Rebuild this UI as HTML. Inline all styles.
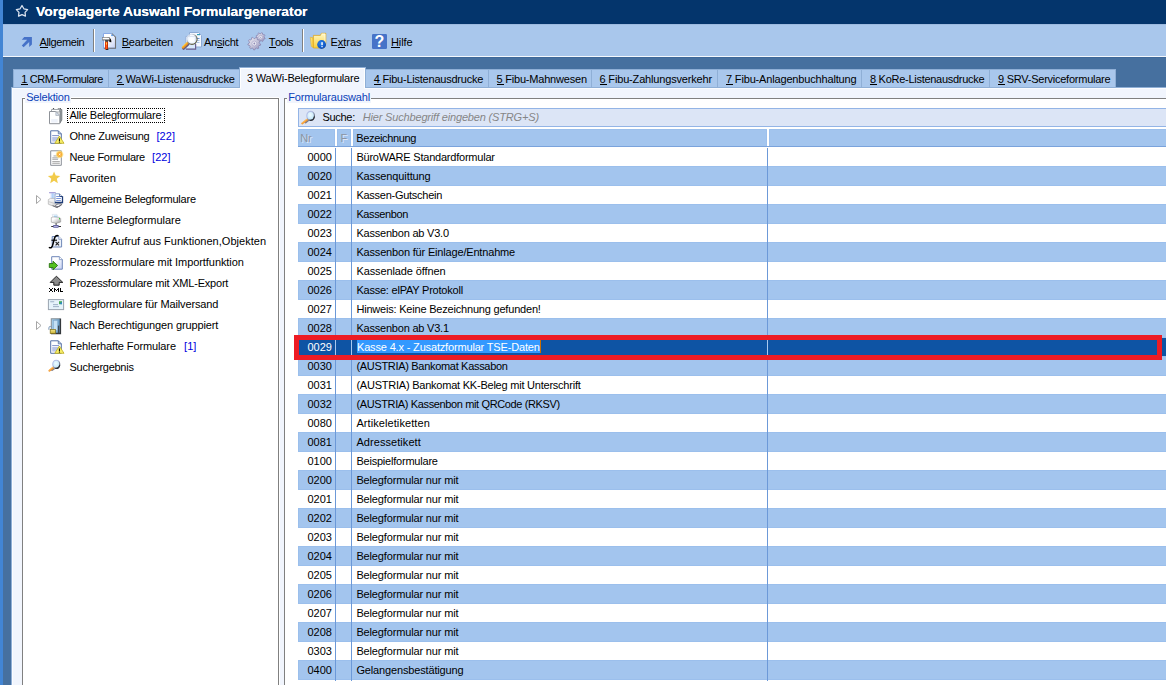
<!DOCTYPE html><html><head><meta charset="utf-8"><title>Vorgelagerte Auswahl Formulargenerator</title><style>
html,body{margin:0;padding:0}body{width:1166px;height:685px;overflow:hidden;position:relative;background:#46709F;font-family:"Liberation Sans", sans-serif;font-size:11px}
div,span,svg{position:absolute;box-sizing:border-box}
.t{white-space:pre;line-height:14px;height:14px;font-size:11px}
.t u{position:static;text-decoration:none;border-bottom:1px solid currentColor;display:inline-block;line-height:10px;height:10px;padding-right:1.3px;margin-right:-1.3px}
.title{transform-origin:0 0;text-shadow:0 0 .6px #fff}
.hdr{text-shadow:1px 1px 0 rgba(255,255,255,.6)}
</style></head><body>
<div style="left:0;top:0;width:3px;height:685px;background:#4285D4"></div>
<div style="left:3px;top:0;width:1163px;height:24px;background:#04356C"></div>
<div style="left:3px;top:24px;width:1163px;height:32px;background:#A9C7EC"></div>
<div style="left:3px;top:56px;width:1163px;height:1px;background:#F4F8FD"></div>
<div style="left:93px;top:29px;width:1px;height:23px;background:#808080"></div><div style="left:94px;top:29px;width:1px;height:23px;background:#fff"></div>
<div style="left:302px;top:29px;width:1px;height:23px;background:#808080"></div><div style="left:303px;top:29px;width:1px;height:23px;background:#fff"></div>
<div style="left:3px;top:24px;width:1163px;height:1px;background:#9DBADF"></div>
<div style="left:3px;top:57px;width:1163px;height:1px;background:#3E6899"></div>
<div style="left:13px;top:69px;width:1103px;height:18px;background:#A9C7EC;border-top:1px solid #8FAFD6;border-left:1px solid #8FAFD6"></div>
<div style="left:108px;top:69px;width:1px;height:18px;background:#8FAFD6"></div>
<div style="left:488px;top:69px;width:1px;height:18px;background:#8FAFD6"></div>
<div style="left:591px;top:69px;width:1px;height:18px;background:#8FAFD6"></div>
<div style="left:717px;top:69px;width:1px;height:18px;background:#8FAFD6"></div>
<div style="left:861px;top:69px;width:1px;height:18px;background:#8FAFD6"></div>
<div style="left:989px;top:69px;width:1px;height:18px;background:#8FAFD6"></div>
<div style="left:1115px;top:69px;width:1px;height:18px;background:#8FAFD6"></div>
<div style="left:11px;top:87px;width:1160px;height:600px;background:#FBFCFF;border-top:1px solid #8FAFD6;border-left:1px solid #8FAFD6"></div>
<div style="left:13px;top:89px;width:1160px;height:600px;background:#F1F5FD"></div>
<div style="left:239px;top:67px;width:127px;height:21px;background:#fff;border:1px solid #8FAFD6;border-bottom:none"></div>
<div style="left:241px;top:69px;width:123px;height:21px;background:#F1F5FD"></div>
<div style="left:22px;top:98px;width:257px;height:600px;background:#fff;border:1px solid #808080;box-shadow:1px 0 0 #fff,0 -1px 0 #fff"></div>
<div style="left:284px;top:98px;width:900px;height:600px;background:#fff;border:1px solid #808080;box-shadow:-1px 0 0 #fff inset"></div>
<div style="left:25px;top:92px;width:46px;height:11px;background:#F1F5FD"></div>
<div style="left:287px;top:92px;width:84px;height:11px;background:#F1F5FD"></div>
<div style="left:67px;top:108px;width:98px;height:15px;border:1px dotted #000"></div>
<div style="left:298px;top:108px;width:900px;height:19px;background:#DCE5F6;border:1px solid #93B4E6"></div>
<div style="left:298px;top:129px;width:37px;height:17px;background:#A3C5EE;border:1px solid #9BBFEC;border-bottom:none"></div>
<div style="left:337px;top:129px;width:14px;height:17px;background:#A3C5EE;border:1px solid #9BBFEC;border-bottom:none"></div>
<div style="left:353px;top:129px;width:414px;height:17px;background:#A3C5EE;border:1px solid #9BBFEC;border-bottom:none"></div>
<div style="left:769px;top:129px;width:431px;height:17px;background:#A3C5EE;border:1px solid #9BBFEC;border-bottom:none"></div>
<div style="left:298px;top:146px;width:900px;height:1px;background:#7AA3DC"></div>
<div style="left:298px;top:166px;width:900px;height:20px;background:#A3C5EE;border:1px solid #9BBFEC"></div>
<div style="left:298px;top:204px;width:900px;height:20px;background:#A3C5EE;border:1px solid #9BBFEC"></div>
<div style="left:298px;top:242px;width:900px;height:20px;background:#A3C5EE;border:1px solid #9BBFEC"></div>
<div style="left:298px;top:280px;width:900px;height:20px;background:#A3C5EE;border:1px solid #9BBFEC"></div>
<div style="left:298px;top:318px;width:900px;height:20px;background:#A3C5EE;border:1px solid #9BBFEC"></div>
<div style="left:298px;top:338px;width:900px;height:18px;background:#0E54A4"></div>
<div style="left:357px;top:339px;width:183px;height:14px;background:#3399FF"></div>
<div style="left:540px;top:339px;width:1px;height:14px;background:#CC6E00"></div>
<div style="left:298px;top:356px;width:900px;height:20px;background:#A3C5EE;border:1px solid #9BBFEC"></div>
<div style="left:298px;top:394px;width:900px;height:20px;background:#A3C5EE;border:1px solid #9BBFEC"></div>
<div style="left:298px;top:432px;width:900px;height:20px;background:#A3C5EE;border:1px solid #9BBFEC"></div>
<div style="left:298px;top:470px;width:900px;height:20px;background:#A3C5EE;border:1px solid #9BBFEC"></div>
<div style="left:298px;top:508px;width:900px;height:20px;background:#A3C5EE;border:1px solid #9BBFEC"></div>
<div style="left:298px;top:546px;width:900px;height:20px;background:#A3C5EE;border:1px solid #9BBFEC"></div>
<div style="left:298px;top:584px;width:900px;height:20px;background:#A3C5EE;border:1px solid #9BBFEC"></div>
<div style="left:298px;top:622px;width:900px;height:20px;background:#A3C5EE;border:1px solid #9BBFEC"></div>
<div style="left:298px;top:660px;width:900px;height:20px;background:#A3C5EE;border:1px solid #9BBFEC"></div>
<div style="left:335px;top:148px;width:1px;height:533px;background:#6C99D8"></div>
<div style="left:335px;top:338px;width:1px;height:18px;background:#A9C8EE"></div>
<div style="left:351px;top:148px;width:1px;height:533px;background:#6C99D8"></div>
<div style="left:351px;top:338px;width:1px;height:18px;background:#A9C8EE"></div>
<div style="left:767px;top:148px;width:1px;height:533px;background:#6C99D8"></div>
<div style="left:767px;top:338px;width:1px;height:18px;background:#A9C8EE"></div>
<div style="left:294px;top:335px;width:868px;height:25px;border:5px solid #ED1C24"></div>
<svg width="1166" height="685" viewBox="0 0 1166 685" style="left:0;top:0"><defs><linearGradient id="gDoc" x1="0" y1="0" x2="1" y2="1"><stop offset="0.35" stop-color="#fff"/><stop offset="1" stop-color="#C4D0F4"/></linearGradient><linearGradient id="gHam" x1="0" y1="0" x2="0" y2="1"><stop offset="0" stop-color="#C8C8C8"/><stop offset="0.35" stop-color="#FFFFFF"/><stop offset="0.6" stop-color="#F0F0F0"/><stop offset="1" stop-color="#5A5A5A"/></linearGradient><linearGradient id="gHandle" x1="0" y1="0" x2="1" y2="0"><stop offset="0" stop-color="#D42A08"/><stop offset="0.5" stop-color="#FF5A18"/><stop offset="1" stop-color="#A81C04"/></linearGradient><linearGradient id="gFold" x1="0" y1="0" x2="0" y2="1"><stop offset="0" stop-color="#FFF9C8"/><stop offset="1" stop-color="#F7CF3C"/></linearGradient><linearGradient id="gFold2" x1="0" y1="0" x2="1" y2="0"><stop offset="0" stop-color="#FFF2A0"/><stop offset="1" stop-color="#F2C024"/></linearGradient><radialGradient id="gInfo" cx="0.4" cy="0.35" r="0.7"><stop offset="0" stop-color="#2C86F0"/><stop offset="1" stop-color="#0648B8"/></radialGradient><radialGradient id="gLens" cx="0.45" cy="0.4" r="0.6"><stop offset="0" stop-color="#F0FBFF"/><stop offset="1" stop-color="#BCE4FA"/></radialGradient><linearGradient id="gRim" x1="0" y1="0" x2="1" y2="1"><stop offset="0.35" stop-color="#B4BEE6"/><stop offset="0.8" stop-color="#5A6070"/></linearGradient><linearGradient id="gGear" x1="0" y1="0" x2="1" y2="1"><stop offset="0" stop-color="#ECECF4"/><stop offset="0.55" stop-color="#C4C2D8"/><stop offset="1" stop-color="#9490BA"/></linearGradient><linearGradient id="gRimA" x1="0" y1="0" x2="1" y2="1"><stop offset="0.25" stop-color="#D4DCEA"/><stop offset="0.7" stop-color="#5E5C44"/></linearGradient><linearGradient id="gPap" x1="0" y1="0" x2="1" y2="0"><stop offset="0" stop-color="#F6F4FF"/><stop offset="0.6" stop-color="#A8CCF8"/><stop offset="1" stop-color="#D8E8FC"/></linearGradient><linearGradient id="gPrn2" x1="0" y1="0" x2="0.6" y2="1"><stop offset="0" stop-color="#FAFAFA"/><stop offset="0.6" stop-color="#E6E6E6"/><stop offset="1" stop-color="#A8A8A8"/></linearGradient><linearGradient id="gPrn3" x1="0" y1="0" x2="1" y2="1"><stop offset="0.3" stop-color="#FDFDFD"/><stop offset="0.6" stop-color="#D8D8D8"/><stop offset="1" stop-color="#8E8E8E"/></linearGradient><linearGradient id="gLock" x1="0" y1="0" x2="0" y2="1"><stop offset="0" stop-color="#F4E88C"/><stop offset="1" stop-color="#C8B030"/></linearGradient><linearGradient id="gDoor" x1="0" y1="0" x2="1" y2="0"><stop offset="0" stop-color="#A8D0EC"/><stop offset="1" stop-color="#5E94C0"/></linearGradient><linearGradient id="gPrn" x1="0" y1="0" x2="0" y2="1"><stop offset="0" stop-color="#F2F2F2"/><stop offset="1" stop-color="#9A9A9A"/></linearGradient><radialGradient id="gNew" cx="0.5" cy="0.5" r="0.5"><stop offset="0" stop-color="#FFEFC8"/><stop offset="0.3" stop-color="#F9A21E"/><stop offset="0.55" stop-color="#FBB840" stop-opacity="0.95"/><stop offset="0.8" stop-color="#FFE070" stop-opacity="0.55"/><stop offset="1" stop-color="#FFF0A0" stop-opacity="0"/></radialGradient></defs><polygon points="22.00,5.50 23.88,8.81 27.61,9.58 25.04,12.39 25.47,16.17 22.00,14.60 18.53,16.17 18.96,12.39 16.39,9.58 20.12,8.81" fill="none" stroke="#DCE4F0" stroke-width="1.25" stroke-linejoin="round"/>
<polygon points="24.2,37.1 31.9,37.1 31.9,44.6 29.2,47 29.2,42 23.6,47.2 21.8,45.5 27.2,39.8 21.8,39.8" fill="#4672C8"/>
<path d="M103.5 33.5 H111.5 L115.5 37.5 V48.2 H103.5 Z" fill="url(#gDoc)" stroke="#86A8E6" stroke-width="1"/>
<path d="M111.8 33.6 L115.5 37.3 V48.2 H103.8" fill="none" stroke="#707070" stroke-width="1.1"/>
<path d="M111.4 33.8 L115.2 37.6 H111.4 Z" fill="#E8F0FF"/><path d="M111.4 34 L113.4 36 H111.4 Z" fill="#3C8CE8"/>
<path d="M107.5 37.5 Q111.5 37.3 111.4 42.3 L109.5 41.9 Q109.7 40.1 107.5 40.1 Z" fill="#0a0a0a"/>
<rect x="102.3" y="37.5" width="7.2" height="2.6" fill="url(#gHam)" stroke="#7C7C7C" stroke-width="0.6"/>
<path d="M105 40.1 H108.6 L108 42 H105.2 Z" fill="#4a4a4a"/>
<rect x="105" y="41.8" width="3" height="7.9" fill="url(#gHandle)"/><rect x="106" y="42.6" width="1" height="2" fill="#FFD24A"/>
<rect x="106" y="49" width="2.4" height="0.9" fill="#222"/>
<path d="M189.5 32.5 H198.5 L201.5 35.5 V47 H189.5 Z" fill="#F4F8FF" stroke="#8DAAD4" stroke-width="1"/>
<rect x="197" y="34" width="3" height="1.2" fill="#2C9CB8"/><rect x="196.5" y="38" width="3" height="0.9" fill="#5C86C8"/><rect x="196.5" y="40" width="3" height="0.9" fill="#9CB8E0"/><rect x="196.5" y="42" width="3" height="0.9" fill="#9CB8E0"/>
<path d="M185.7 36.4 H195.5 V49.2 H185.7 Z" fill="#D8E8FC" stroke="#9CB4DC" stroke-width="1"/>
<path d="M186 49.2 H195.6 V44" fill="none" stroke="#6A6090" stroke-width="1.2"/>
<line x1="187.9" y1="44.0" x2="183.6" y2="48.2" stroke="#6A5A78" stroke-width="3.2" stroke-linecap="round"/>
<line x1="187.4" y1="43.2" x2="183.0" y2="47.4" stroke="#F29A1C" stroke-width="2.4" stroke-linecap="round"/>
<line x1="186.6" y1="42.8" x2="182.6" y2="46.6" stroke="#FFE468" stroke-width="0.9" stroke-linecap="round"/>
<circle cx="192" cy="39.3" r="5.1" fill="#fff" fill-opacity="0.62" stroke="url(#gRimA)" stroke-width="1.1"/>
<circle cx="191.6" cy="39.6" r="2.6" fill="#fff" fill-opacity="0.85"/>
<polygon points="265.11,38.11 264.84,38.98 263.50,39.16 263.07,39.68 263.14,41.03 262.34,41.46 261.27,40.64 260.59,40.70 259.69,41.71 258.82,41.44 258.64,40.10 258.12,39.67 256.77,39.74 256.34,38.94 257.16,37.87 257.10,37.19 256.09,36.29 256.36,35.42 257.70,35.24 258.13,34.72 258.06,33.37 258.86,32.94 259.93,33.76 260.61,33.70 261.51,32.69 262.38,32.96 262.56,34.30 263.08,34.73 264.43,34.66 264.86,35.46 264.04,36.53 264.10,37.21" fill="url(#gGear)" stroke="#8884B0" stroke-width="0.8" stroke-linejoin="round"/><circle cx="260.6" cy="37.2" r="1.8" fill="#ECECF4" stroke="#A29EC4" stroke-width="0.6"/><circle cx="260.6" cy="37.2" r="0.54" fill="#8E8AB4"/>
<polygon points="260.67,44.14 260.46,45.24 258.80,45.67 258.36,46.42 258.77,48.08 257.90,48.79 256.36,48.06 255.53,48.35 254.78,49.88 253.66,49.87 252.94,48.31 252.13,48.00 250.56,48.70 249.72,47.97 250.17,46.32 249.74,45.56 248.10,45.08 247.92,43.98 249.32,43.00 249.49,42.14 248.53,40.72 249.10,39.76 250.81,39.92 251.48,39.37 251.67,37.67 252.72,37.30 253.93,38.51 254.80,38.52 256.04,37.34 257.08,37.73 257.22,39.44 257.88,40.01 259.59,39.90 260.13,40.87 259.15,42.27 259.29,43.13" fill="url(#gGear)" stroke="#8884B0" stroke-width="0.8" stroke-linejoin="round"/><circle cx="254.3" cy="43.5" r="2.4" fill="#ECECF4" stroke="#A29EC4" stroke-width="0.6"/><circle cx="254.3" cy="43.5" r="0.9" fill="#8E8AB4"/>
<path d="M310.3 37.3 L313.4 37.9 V47.6 L311.4 46.4 Z" fill="url(#gFold2)" stroke="#E8B020" stroke-width="0.6"/>
<path d="M313.4 35.4 H320.4 L321.4 33.3 H325.8 V44 L324 48 H313.4 Z" fill="url(#gFold)" stroke="#E2A81C" stroke-width="0.8"/>
<path d="M321.6 34 H325 V44" fill="none" stroke="#FFFDE8" stroke-width="0.8"/>
<circle cx="321.6" cy="44.5" r="4.4" fill="url(#gInfo)"/>
<rect x="321.3" y="42.2" width="1.5" height="3" fill="#fff"/><rect x="321.3" y="46" width="1.5" height="1.2" fill="#DCE8FF"/>
<rect x="372" y="34" width="15" height="15" rx="1.2" fill="#4673C8"/>
<text x="379.5" y="47" font-family="Liberation Sans, sans-serif" font-weight="bold" font-size="16" fill="#fff" text-anchor="middle">?</text>
<line x1="308" y1="120.5" x2="305.55" y2="122.4" stroke="#54505E" stroke-width="2" stroke-linecap="round" opacity="0.7"/><line x1="307.7" y1="119.3" x2="302.2" y2="123.5" stroke="#F39A30" stroke-width="2" stroke-linecap="round"/><line x1="307.1" y1="119" x2="302.1" y2="123" stroke="#FFC670" stroke-width="0.7" stroke-linecap="round"/><ellipse cx="310.6" cy="115.8" rx="3.8" ry="4.4" fill="url(#gLens)" stroke="url(#gRim)" stroke-width="1.1"/><path d="M314.3 116.8 A3.9 4.5 0 0 1 310 120.3" fill="none" stroke="#2E3038" stroke-width="1.2" stroke-linecap="round"/>
<path d="M53.5 108 V109.5 M60.3 108 V109.5" stroke="#555" stroke-width="1.2"/>
<path d="M58 108.6 L61.9 109.6 V120 L60 123 V111 Z" fill="#9CA2A6" stroke="#5A5F63" stroke-width="0.6"/>
<path d="M51.5 109.5 H59.5 V112 H51.5 Z" fill="#fff" stroke="#9A9EA4" stroke-width="0.9"/>
<path d="M49.5 111.5 H55.8 L59.8 115.5 V123.7 H49.5 Z" fill="#fff" stroke="#8E9298" stroke-width="1"/>
<path d="M55.8 111.5 L59.8 115.5 H55.8 Z" fill="#D4DCE8" stroke="#A0A6AE" stroke-width="0.6"/>
<rect x="51.2" y="119" width="6.5" height="3.6" fill="#EEF2FA"/>
<g transform="translate(0,0)"><path d="M50.7 130.8 H58.3 L61.3 133.8 V143.3 H50.7 Z" fill="#fff" stroke="#5470A6" stroke-width="1"/><path d="M58.3 130.8 V133.8 H61.3" fill="none" stroke="#5470A6" stroke-width="0.9"/><rect x="52.2" y="135" width="6.8" height="1" fill="#8C9CD0"/><rect x="52.2" y="136.8" width="6.8" height="4.8" fill="#BAC4E6"/><path d="M59.4 136.0 L64.0 143.3 H54.8 Z" fill="#F8EE68" stroke="#BCAC1C" stroke-width="0.8" stroke-linejoin="round"/><rect x="58.9" y="138.4" width="1.1" height="2.8" fill="#1a1a00"/><rect x="58.9" y="141.6" width="1.1" height="1" fill="#1a1a00"/></g>
<g transform="translate(0,210)"><path d="M50.7 130.8 H58.3 L61.3 133.8 V143.3 H50.7 Z" fill="#fff" stroke="#5470A6" stroke-width="1"/><path d="M58.3 130.8 V133.8 H61.3" fill="none" stroke="#5470A6" stroke-width="0.9"/><rect x="52.2" y="135" width="6.8" height="1" fill="#8C9CD0"/><rect x="52.2" y="136.8" width="6.8" height="4.8" fill="#BAC4E6"/><path d="M59.4 136.0 L64.0 143.3 H54.8 Z" fill="#F8EE68" stroke="#BCAC1C" stroke-width="0.8" stroke-linejoin="round"/><rect x="58.9" y="138.4" width="1.1" height="2.8" fill="#1a1a00"/><rect x="58.9" y="141.6" width="1.1" height="1" fill="#1a1a00"/></g>
<path d="M50.7 150.8 H61.3 V165.3 H50.7 Z" fill="#fff" stroke="#8A8F98" stroke-width="1"/>
<rect x="53.5" y="155.5" width="3.5" height="0.9" fill="#9C9C9C"/>
<rect x="52.3" y="157.4" width="6.2" height="0.9" fill="#9C9C9C"/>
<rect x="52.3" y="158.8" width="5.7" height="0.9" fill="#9C9C9C"/>
<rect x="52.3" y="161.2" width="7.5" height="0.9" fill="#9C9C9C"/>
<rect x="52.3" y="162.8" width="7.5" height="0.9" fill="#9C9C9C"/>
<circle cx="59.6" cy="154.4" r="4.4" fill="url(#gNew)"/>
<path d="M58.7 153.5 L60.5 155.3 M60.5 153.5 L58.7 155.3" stroke="#FFF8E0" stroke-width="0.8"/>
<polygon points="54.05,171.40 55.75,175.55 60.23,175.89 56.81,178.80 57.87,183.16 54.05,180.80 50.23,183.16 51.29,178.80 47.87,175.89 52.35,175.55" fill="#F2CB4A"/>
<path d="M36.5 195.5 L41 199.5 L36.5 203.5 Z" fill="#fff" stroke="#A6A6A6" stroke-width="1"/>
<path d="M36.5 321.5 L41 325.5 L36.5 329.5 Z" fill="#fff" stroke="#A6A6A6" stroke-width="1"/>
<rect x="50.2" y="193.2" width="4.3" height="5.6" fill="url(#gPap)"/>
<rect x="49.1" y="192" width="6.6" height="1.3" fill="#A9A2DA"/>
<path d="M48.3 199.6 L50.4 198.4 H56 L62 200.6 V204.4 L57.2 207.7 L48.3 204.2 Z" fill="url(#gPrn2)" stroke="#A6A6A6" stroke-width="0.6"/>
<path d="M48.6 201.6 L56.5 204 L61.8 201.4" fill="none" stroke="#B4B4B4" stroke-width="0.6"/>
<ellipse cx="58.4" cy="205.2" rx="2.9" ry="1.2" fill="#fff" stroke="#4A4A58" stroke-width="0.6" transform="rotate(-14 58.4 205.2)"/>
<path d="M52.6 205.6 L57 207.5 L61.6 204.6" fill="none" stroke="#5A5A62" stroke-width="0.8"/>
<path d="M55 193.8 H59.8 L62.4 196.4 V202.4 H55 Z" fill="#fff"/>
<path d="M55 202.6 V193.8 H59.6" fill="none" stroke="#8CA4CC" stroke-width="1"/>
<path d="M54.8 202.5 H62.5 V196.2" fill="none" stroke="#1E3C78" stroke-width="1.3"/>
<path d="M59.4 193.4 L62.9 196.9 H59.4 Z" fill="#1E3C78"/><rect x="60" y="195.1" width="1" height="1" fill="#E8EEFA"/>
<rect x="56.2" y="196.1" width="3" height="0.9" fill="#6C8CD8"/>
<rect x="56.2" y="198.1" width="4.7" height="0.9" fill="#6C8CD8"/>
<rect x="56.2" y="200.1" width="4.7" height="0.9" fill="#6C8CD8"/>
<path d="M52.2 214.4 H57 L58.4 218.2 H53 Z" fill="#fff" stroke="#C8D4E4" stroke-width="0.5"/>
<path d="M53.6 215.4 H57 L57.8 217.8 H54.2 Z" fill="#A8D4F4"/>
<path d="M51.3 217.6 L53 216.9 L59.6 217.4 L60.7 218.6 V222 Q56 224.6 51.3 222.2 Z" fill="url(#gPrn3)" stroke="#9A9A9A" stroke-width="0.6"/>
<rect x="59" y="218" width="1" height="1.4" fill="#3CC43C"/>
<rect x="55.6" y="223.2" width="1" height="2.2" fill="#444"/><rect x="51.2" y="226" width="9.8" height="0.9" fill="#1a1a1a"/>
<rect x="53" y="225.1" width="5.8" height="2.6" rx="1" fill="#5E5E9E"/><rect x="54" y="225.9" width="3.8" height="0.9" fill="#C8C8EC"/>
<path d="M52.2 236.5 H58.8 L61.6 239.3 V247 H52.2 Z" fill="#ECF1FA" stroke="#7088B8" stroke-width="1"/>
<path d="M58.8 236.5 V239.3 H61.6" fill="#fff" stroke="#6E86B8" stroke-width="0.7"/>
<path d="M49.4 247.6 Q51.6 248.6 52.6 245.4 L54.6 238 Q55.6 234.8 58 235.6" fill="none" stroke="#000" stroke-width="1.5" stroke-linecap="round"/>
<path d="M51.4 240.2 H57" stroke="#000" stroke-width="1.1"/>
<path d="M55.6 241.8 L59 245.4 M59 241.8 L55.6 245.4" stroke="#222" stroke-width="1.1"/>
<path d="M51.7 256.7 H59.4 L62.3 259.6 V269.2 H51.7 Z" fill="url(#gDoc)" stroke="#6E86B8" stroke-width="1"/>
<path d="M59.4 256.7 V259.6 H62.3" fill="#fff" stroke="#6E86B8" stroke-width="0.7"/>
<path d="M49.3 263.5 H53 V261.2 L57.6 265.5 L53 269.8 V267.5 H49.3 Z" fill="#52C020" stroke="#2A7410" stroke-width="0.9" stroke-linejoin="round"/>
<path d="M56.4 276.2 L62.8 282.4 H59.2 V285.2 H53.8 V282.4 H50.2 Z" fill="#8C8C8C" stroke="#111" stroke-width="0.9" stroke-linejoin="miter"/>
<path d="M49 288h1v1h-1zM52 288h1v1h-1zM50 289h1v1h-1zM51 289h1v1h-1zM50 290h1v1h-1zM51 290h1v1h-1zM49 291h1v1h-1zM52 291h1v1h-1zM54 288h1v1h-1zM58 288h1v1h-1zM54 289h1v1h-1zM55 289h1v1h-1zM57 289h1v1h-1zM58 289h1v1h-1zM54 290h1v1h-1zM56 290h1v1h-1zM58 290h1v1h-1zM54 291h1v1h-1zM58 291h1v1h-1zM60 288h1v1h-1zM60 289h1v1h-1zM60 290h1v1h-1zM60 291h1v1h-1zM61 291h1v1h-1zM62 291h1v1h-1z" fill="#000"/>
<rect x="48.4" y="299.6" width="15.2" height="10" fill="#E6F3FB" stroke="#9AA4B0" stroke-width="1"/>
<rect x="59" y="301.2" width="3" height="3" fill="#46AC50"/><rect x="60.4" y="302.4" width="1.6" height="1.8" fill="#2C84D8"/>
<rect x="50.2" y="301.4" width="4" height="0.8" fill="#8AA0B8"/><rect x="53" y="304.3" width="5" height="0.8" fill="#8AA0B8"/><rect x="53" y="306.3" width="6" height="0.8" fill="#8AA0B8"/>
<rect x="51.3" y="318.7" width="9.1" height="14.7" fill="url(#gDoor)"/>
<rect x="53.3" y="320.4" width="4.4" height="10" fill="#C4E0F4" stroke="#7CA8CC" stroke-width="0.6"/>
<path d="M51.3 333.4 V318.7 H60" fill="none" stroke="#8A9298" stroke-width="1.1"/>
<path d="M51 333.5 H60.4 V318.4" fill="none" stroke="#34383C" stroke-width="1.4"/>
<rect x="57.9" y="325.6" width="1.3" height="7.4" fill="#3C4854"/>
<path d="M48.9 329.8 V327.9 Q48.9 326.4 50.3 326.4 Q51.7 326.4 51.7 327.9" fill="none" stroke="#7C98B8" stroke-width="1"/>
<rect x="50.2" y="329.4" width="5.4" height="4.2" fill="url(#gLock)" stroke="#7C6C14" stroke-width="0.7"/>
<line x1="53.85" y1="368.6" x2="52.05" y2="370.05" stroke="#54505E" stroke-width="2" stroke-linecap="round" opacity="0.7"/><line x1="53.55" y1="367.4" x2="49.35" y2="370.7" stroke="#F39A30" stroke-width="2" stroke-linecap="round"/><line x1="52.95" y1="367.1" x2="49.25" y2="370.2" stroke="#FFC670" stroke-width="0.7" stroke-linecap="round"/><ellipse cx="56.25" cy="364.3" rx="3.5" ry="4" fill="url(#gLens)" stroke="url(#gRim)" stroke-width="1.1"/><path d="M59.65 365.3 A3.6 4.1 0 0 1 55.65 368.4" fill="none" stroke="#2E3038" stroke-width="1.2" stroke-linecap="round"/></svg>
<span class="t title" style="left:36.2px;top:4.5px;color:#fff;font-size:12.5px;font-weight:bold;transform:scaleX(1.1072);">Vorgelagerte Auswahl Formulargenerator</span>
<span class="t" style="left:39.6px;top:35px;color:#000;letter-spacing:-0.414px;"><u>A</u>llgemein</span>
<span class="t" style="left:121.7px;top:35px;color:#000;letter-spacing:-0.191px;"><u>B</u>earbeiten</span>
<span class="t" style="left:203.9px;top:35px;color:#000;letter-spacing:-0.232px;">An<u>s</u>icht</span>
<span class="t" style="left:268.8px;top:35px;color:#000;letter-spacing:-0.530px;"><u>T</u>ools</span>
<span class="t" style="left:330.5px;top:35px;color:#000;letter-spacing:-0.017px;">E<u>x</u>tras</span>
<span class="t" style="left:391px;top:35px;color:#000;letter-spacing:-0.104px;"><u>H</u>ilfe</span>
<span class="t" style="left:21.3px;top:72px;color:#000;letter-spacing:-0.417px;"><u>1</u> CRM-Formulare</span>
<span class="t" style="left:116.6px;top:72px;color:#000;letter-spacing:-0.170px;"><u>2</u> WaWi-Listenausdrucke</span>
<span class="t" style="left:247px;top:71px;color:#000;letter-spacing:-0.188px;">3 WaWi-Belegformulare</span>
<span class="t" style="left:373.7px;top:72px;color:#000;letter-spacing:-0.222px;"><u>4</u> Fibu-Listenausdrucke</span>
<span class="t" style="left:496.5px;top:72px;color:#000;letter-spacing:-0.204px;"><u>5</u> Fibu-Mahnwesen</span>
<span class="t" style="left:599.5px;top:72px;color:#000;letter-spacing:-0.166px;"><u>6</u> Fibu-Zahlungsverkehr</span>
<span class="t" style="left:726px;top:72px;color:#000;letter-spacing:-0.165px;"><u>7</u> Fibu-Anlagenbuchhaltung</span>
<span class="t" style="left:870px;top:72px;color:#000;letter-spacing:-0.279px;"><u>8</u> KoRe-Listenausdrucke</span>
<span class="t" style="left:998px;top:72px;color:#000;letter-spacing:-0.247px;"><u>9</u> SRV-Serviceformulare</span>
<span class="t" style="left:26.2px;top:90px;color:#0A3FB8;letter-spacing:-0.196px;">Selektion</span>
<span class="t" style="left:288.2px;top:90px;color:#0A3FB8;letter-spacing:-0.177px;">Formularauswahl</span>
<span class="t" style="left:69.5px;top:108px;color:#000;letter-spacing:-0.217px;">Alle Belegformulare</span>
<span class="t" style="left:69.5px;top:129px;color:#000;letter-spacing:-0.229px;">Ohne Zuweisung</span>
<span class="t" style="left:156.4px;top:129px;color:#0000E0;letter-spacing:0.080px;">[22]</span>
<span class="t" style="left:69.5px;top:150px;color:#000;letter-spacing:-0.291px;">Neue Formulare</span>
<span class="t" style="left:152px;top:150px;color:#0000E0;letter-spacing:0.080px;">[22]</span>
<span class="t" style="left:69.5px;top:171px;color:#000;letter-spacing:0.068px;">Favoriten</span>
<span class="t" style="left:69.5px;top:192px;color:#000;letter-spacing:-0.232px;">Allgemeine Belegformulare</span>
<span class="t" style="left:69.5px;top:213px;color:#000;letter-spacing:-0.029px;">Interne Belegformulare</span>
<span class="t" style="left:69.5px;top:234px;color:#000;letter-spacing:0.022px;">Direkter Aufruf aus Funktionen,Objekten</span>
<span class="t" style="left:69.5px;top:255px;color:#000;letter-spacing:-0.067px;">Prozessformulare mit Importfunktion</span>
<span class="t" style="left:69.5px;top:276px;color:#000;letter-spacing:-0.205px;">Prozessformulare mit XML-Export</span>
<span class="t" style="left:69.5px;top:297px;color:#000;letter-spacing:-0.137px;">Belegformulare für Mailversand</span>
<span class="t" style="left:69.5px;top:318px;color:#000;letter-spacing:-0.120px;">Nach Berechtigungen gruppiert</span>
<span class="t" style="left:69.5px;top:339px;color:#000;letter-spacing:-0.116px;">Fehlerhafte Formulare</span>
<span class="t" style="left:184px;top:339px;color:#0000E0;letter-spacing:0.083px;">[1]</span>
<span class="t" style="left:69.5px;top:360px;color:#000;letter-spacing:-0.262px;">Suchergebnis</span>
<span class="t" style="left:322.4px;top:110px;color:#000;letter-spacing:-0.290px;">Suche:</span>
<span class="t" style="left:362.7px;top:110px;color:#868686;font-style:italic;letter-spacing:-0.167px;">Hier Suchbegriff eingeben (STRG+S)</span>
<span class="t hdr" style="left:300.3px;top:131px;color:#8C94A2;letter-spacing:-0.309px;">Nr</span>
<span class="t hdr" style="left:340.6px;top:131px;color:#8C94A2;letter-spacing:-0.734px;">F</span>
<span class="t" style="left:356.3px;top:131px;color:#000;letter-spacing:-0.341px;">Bezeichnung</span>
<span class="t" style="left:307.6px;top:150px;color:#000;letter-spacing:-0.095px;">0000</span>
<span class="t" style="left:356.4px;top:150px;color:#000;letter-spacing:-0.220px;">BüroWARE Standardformular</span>
<span class="t" style="left:307.6px;top:169px;color:#000;letter-spacing:-0.095px;">0020</span>
<span class="t" style="left:356.4px;top:169px;color:#000;letter-spacing:-0.119px;">Kassenquittung</span>
<span class="t" style="left:307.6px;top:188px;color:#000;letter-spacing:-0.095px;">0021</span>
<span class="t" style="left:356.4px;top:188px;color:#000;letter-spacing:-0.266px;">Kassen-Gutschein</span>
<span class="t" style="left:307.6px;top:207px;color:#000;letter-spacing:-0.095px;">0022</span>
<span class="t" style="left:356.4px;top:207px;color:#000;letter-spacing:-0.381px;">Kassenbon</span>
<span class="t" style="left:307.6px;top:226px;color:#000;letter-spacing:-0.095px;">0023</span>
<span class="t" style="left:356.4px;top:226px;color:#000;letter-spacing:-0.208px;">Kassenbon ab V3.0</span>
<span class="t" style="left:307.6px;top:245px;color:#000;letter-spacing:-0.095px;">0024</span>
<span class="t" style="left:356.4px;top:245px;color:#000;letter-spacing:-0.176px;">Kassenbon für Einlage/Entnahme</span>
<span class="t" style="left:307.6px;top:264px;color:#000;letter-spacing:-0.095px;">0025</span>
<span class="t" style="left:356.4px;top:264px;color:#000;letter-spacing:-0.102px;">Kassenlade öffnen</span>
<span class="t" style="left:307.6px;top:283px;color:#000;letter-spacing:-0.095px;">0026</span>
<span class="t" style="left:356.4px;top:283px;color:#000;letter-spacing:-0.218px;">Kasse: elPAY Protokoll</span>
<span class="t" style="left:307.6px;top:302px;color:#000;letter-spacing:-0.095px;">0027</span>
<span class="t" style="left:356.4px;top:302px;color:#000;letter-spacing:-0.198px;">Hinweis: Keine Bezeichnung gefunden!</span>
<span class="t" style="left:307.6px;top:321px;color:#000;letter-spacing:-0.095px;">0028</span>
<span class="t" style="left:356.4px;top:321px;color:#000;letter-spacing:-0.208px;">Kassenbon ab V3.1</span>
<span class="t" style="left:307.6px;top:340px;color:#fff;letter-spacing:-0.095px;">0029</span>
<span class="t" style="left:357px;top:340px;color:#fff;letter-spacing:-0.166px;">Kasse 4.x - Zusatzformular TSE-Daten</span>
<span class="t" style="left:307.6px;top:359px;color:#000;letter-spacing:-0.095px;">0030</span>
<span class="t" style="left:356.4px;top:359px;color:#000;letter-spacing:-0.311px;">(AUSTRIA) Bankomat Kassabon</span>
<span class="t" style="left:307.6px;top:378px;color:#000;letter-spacing:-0.095px;">0031</span>
<span class="t" style="left:356.4px;top:378px;color:#000;letter-spacing:-0.226px;">(AUSTRIA) Bankomat KK-Beleg mit Unterschrift</span>
<span class="t" style="left:307.6px;top:397px;color:#000;letter-spacing:-0.095px;">0032</span>
<span class="t" style="left:356.4px;top:397px;color:#000;letter-spacing:-0.367px;">(AUSTRIA) Kassenbon mit QRCode (RKSV)</span>
<span class="t" style="left:307.6px;top:416px;color:#000;letter-spacing:-0.095px;">0080</span>
<span class="t" style="left:356.4px;top:416px;color:#000;letter-spacing:0.083px;">Artikeletiketten</span>
<span class="t" style="left:307.6px;top:435px;color:#000;letter-spacing:-0.095px;">0081</span>
<span class="t" style="left:356.4px;top:435px;color:#000;letter-spacing:0.067px;">Adressetikett</span>
<span class="t" style="left:307.6px;top:454px;color:#000;letter-spacing:-0.095px;">0100</span>
<span class="t" style="left:356.4px;top:454px;color:#000;letter-spacing:-0.212px;">Beispielformulare</span>
<span class="t" style="left:307.6px;top:473px;color:#000;letter-spacing:-0.095px;">0200</span>
<span class="t" style="left:356.4px;top:473px;color:#000;letter-spacing:-0.148px;">Belegformular nur mit</span>
<span class="t" style="left:307.6px;top:492px;color:#000;letter-spacing:-0.095px;">0201</span>
<span class="t" style="left:356.4px;top:492px;color:#000;letter-spacing:-0.148px;">Belegformular nur mit</span>
<span class="t" style="left:307.6px;top:511px;color:#000;letter-spacing:-0.095px;">0202</span>
<span class="t" style="left:356.4px;top:511px;color:#000;letter-spacing:-0.148px;">Belegformular nur mit</span>
<span class="t" style="left:307.6px;top:530px;color:#000;letter-spacing:-0.095px;">0203</span>
<span class="t" style="left:356.4px;top:530px;color:#000;letter-spacing:-0.148px;">Belegformular nur mit</span>
<span class="t" style="left:307.6px;top:549px;color:#000;letter-spacing:-0.095px;">0204</span>
<span class="t" style="left:356.4px;top:549px;color:#000;letter-spacing:-0.148px;">Belegformular nur mit</span>
<span class="t" style="left:307.6px;top:568px;color:#000;letter-spacing:-0.095px;">0205</span>
<span class="t" style="left:356.4px;top:568px;color:#000;letter-spacing:-0.148px;">Belegformular nur mit</span>
<span class="t" style="left:307.6px;top:587px;color:#000;letter-spacing:-0.095px;">0206</span>
<span class="t" style="left:356.4px;top:587px;color:#000;letter-spacing:-0.148px;">Belegformular nur mit</span>
<span class="t" style="left:307.6px;top:606px;color:#000;letter-spacing:-0.095px;">0207</span>
<span class="t" style="left:356.4px;top:606px;color:#000;letter-spacing:-0.148px;">Belegformular nur mit</span>
<span class="t" style="left:307.6px;top:625px;color:#000;letter-spacing:-0.095px;">0208</span>
<span class="t" style="left:356.4px;top:625px;color:#000;letter-spacing:-0.148px;">Belegformular nur mit</span>
<span class="t" style="left:307.6px;top:644px;color:#000;letter-spacing:-0.095px;">0303</span>
<span class="t" style="left:356.4px;top:644px;color:#000;letter-spacing:-0.148px;">Belegformular nur mit</span>
<span class="t" style="left:307.6px;top:663px;color:#000;letter-spacing:-0.095px;">0400</span>
<span class="t" style="left:356.4px;top:663px;color:#000;letter-spacing:-0.152px;">Gelangensbestätigung</span>
</body></html>
